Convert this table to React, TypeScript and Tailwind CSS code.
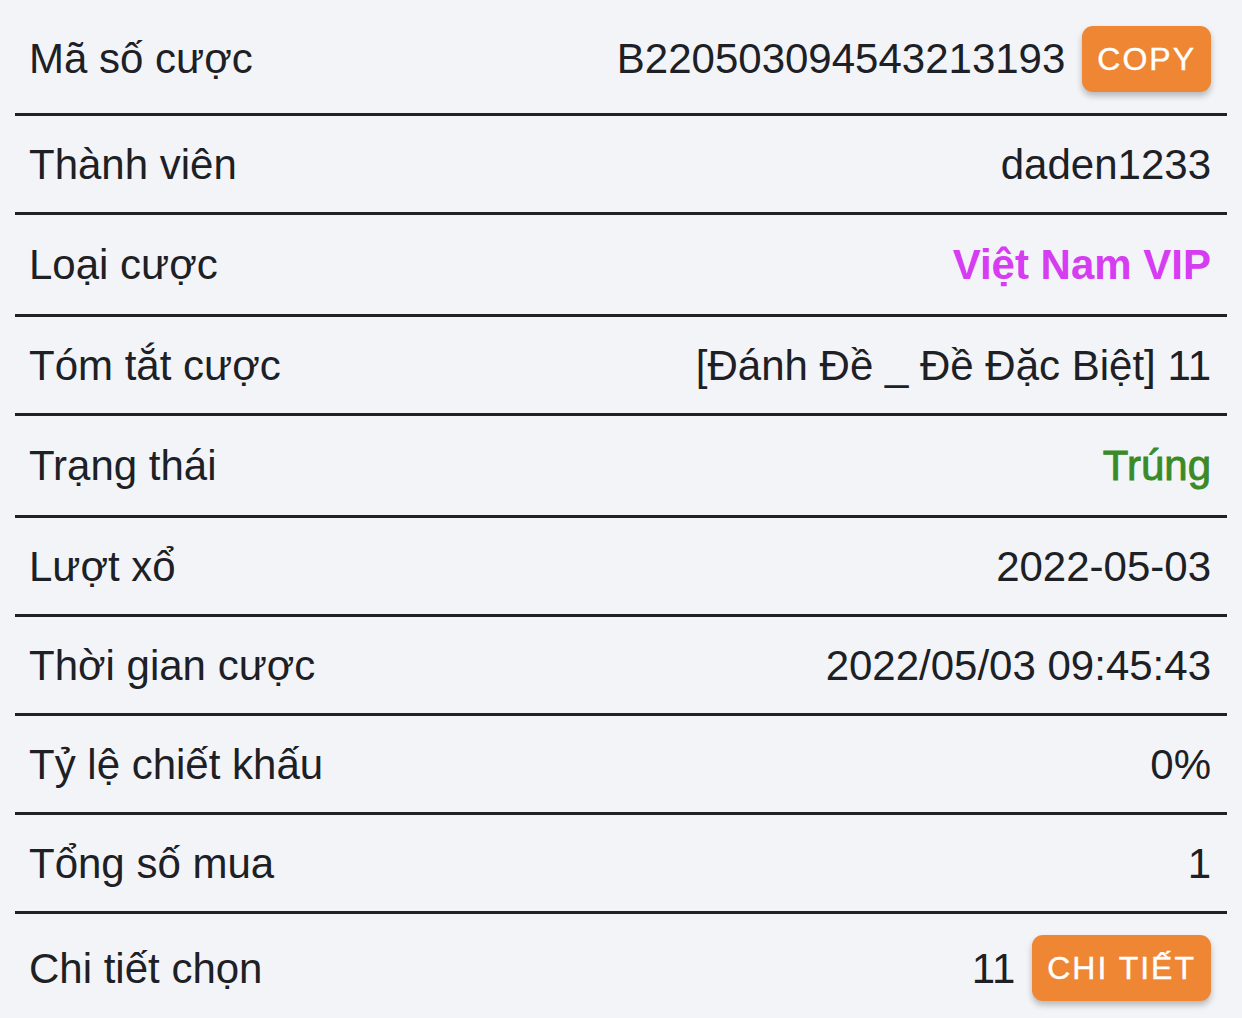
import React from "react";

interface Row {
  label: string;
  value: React.ReactNode;
  h: string;
}

const OrangeButton = ({ children }: { children: React.ReactNode }) => (
  <button className="h-[66px] px-[15px] rounded-[11px] bg-[#ef8633] text-white text-[32px] tracking-[2px] leading-none [-webkit-text-stroke:0.4px_#ffffff] shadow-[0_4px_6px_rgba(0,0,0,0.25)]">
    {children}
  </button>
);

const rows: Row[] = [
  {
    label: "Mã số cược",
    h: "h-[113px] pt-[4px]",
    value: (
      <div className="flex items-center gap-[17px]">
        <span>B220503094543213193</span>
        <OrangeButton>COPY</OrangeButton>
      </div>
    ),
  },
  { label: "Thành viên", h: "h-[96px]", value: "daden1233" },
  {
    label: "Loại cược",
    h: "h-[99px]",
    value: <span className="font-bold text-[#d63cf1]">Việt Nam VIP</span>,
  },
  { label: "Tóm tắt cược", h: "h-[96px]", value: "[Đánh Đề _ Đề Đặc Biệt] 11" },
  {
    label: "Trạng thái",
    h: "h-[99px]",
    value: <span className="text-[#3a8a27] [-webkit-text-stroke:0.9px_#3a8a27]">Trúng</span>,
  },
  { label: "Lượt xổ", h: "h-[96px]", value: "2022-05-03" },
  { label: "Thời gian cược", h: "h-[96px]", value: "2022/05/03 09:45:43" },
  { label: "Tỷ lệ chiết khấu", h: "h-[96px]", value: "0%" },
  { label: "Tổng số mua", h: "h-[96px]", value: "1" },
];

export default function App() {
  return (
    <div
      className="w-[1242px] h-[1018px] bg-[#f2f4f8] text-[#1d2025] text-[42px] overflow-hidden px-[15px]"
      style={{ fontFamily: '"Liberation Sans", Arial, sans-serif' }}
    >
      {rows.map((r) => (
        <React.Fragment key={r.label}>
          <div className={`${r.h} flex items-center justify-between pl-[14px] pr-[16px]`}>
            <span>{r.label}</span>
            {r.value}
          </div>
          <div className="h-[3px] bg-[#1f2126]" />
        </React.Fragment>
      ))}
      {/* last row with detail button */}
      <div className="h-[104px] pt-[4px] flex items-center justify-between pl-[14px] pr-[16px]">
        <span>Chi tiết chọn</span>
        <div className="flex items-center gap-[17px]">
          <span>11</span>
          <OrangeButton>CHI TIẾT</OrangeButton>
        </div>
      </div>
    </div>
  );
}
